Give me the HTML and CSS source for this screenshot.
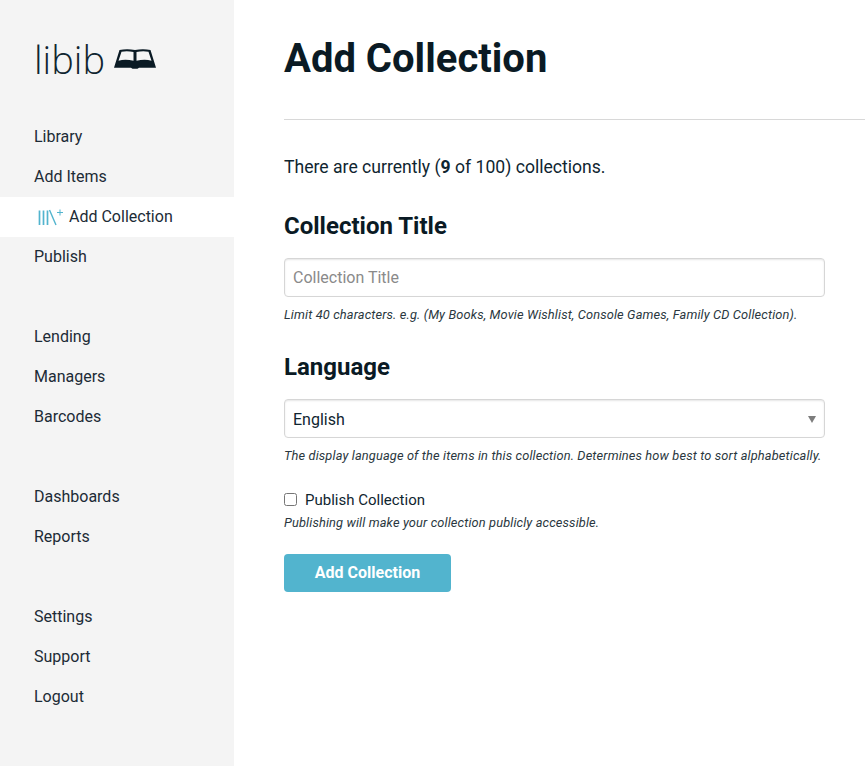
FILE: index.html
```html
<!DOCTYPE html>
<html lang="en">
<head>
<meta charset="utf-8">
<title>Add Collection</title>
<link rel="stylesheet" href="styles.css">
</head>
<body>
<div class="app">
  <aside class="sidebar">
    <div class="logo">
      <span class="logo-text">libib</span>
      <svg class="logo-icon" width="42" height="20" viewBox="0 0 42 20"><path fill-rule="evenodd" d="M5.500 1Q13 -.5 21 1 29 -.5 36.500 1L42 18.800H25L23.500 19.800H18.500L17 18.800H0ZM7.500 2.800 4.500 11.800Q11 9.800 19.500 11.800V3Q13 1.800 7.500 2.800ZM34.500 2.800Q29 1.800 22.500 3V11.800Q31 9.800 37.500 11.800Z" fill="#0a1a24"/></svg>
    </div>
    <nav class="nav">
      <div class="nav-group">
        <a class="nav-item">Library</a>
        <a class="nav-item">Add Items</a>
        <a class="nav-item active">
          <svg class="nav-icon" width="26" height="18" viewBox="0 0 26 18" fill="none" stroke="#52b4ce" stroke-width="1.700"><path d="M1.500 2.500V17M5.500 2.500V17M9.500 2.500V17"/><path d="M11.500 2 18 17" stroke-width="1.400"/><path d="M19 4.500H25M22 1.500V7.500" stroke-width="1"/></svg>
          Add Collection
        </a>
        <a class="nav-item">Publish</a>
      </div>
      <div class="nav-group">
        <a class="nav-item">Lending</a>
        <a class="nav-item">Managers</a>
        <a class="nav-item">Barcodes</a>
      </div>
      <div class="nav-group">
        <a class="nav-item">Dashboards</a>
        <a class="nav-item">Reports</a>
      </div>
      <div class="nav-group">
        <a class="nav-item">Settings</a>
        <a class="nav-item">Support</a>
        <a class="nav-item">Logout</a>
      </div>
    </nav>
  </aside>
  <main class="main">
    <h1 class="title">Add Collection</h1>
    <hr class="rule">
    <p class="count">There are currently (<b>9</b> of 100) collections.</p>
    <form class="form">
      <h2 class="heading">Collection Title</h2>
      <input class="field" type="text" placeholder="Collection Title">
      <p class="help">Limit 40 characters. e.g. (My Books, Movie Wishlist, Console Games, Family CD Collection).</p>
      <h2 class="heading lang">Language</h2>
      <div class="field select">English<span class="arrow"></span></div>
      <p class="help">The display language of the items in this collection. Determines how best to sort alphabetically.</p>
      <label class="check"><input class="box" type="checkbox"> Publish Collection</label>
      <p class="help tight">Publishing will make your collection publicly accessible.</p>
      <button class="btn" type="button">Add Collection</button>
    </form>
  </main>
</div>
</body>
</html>
```
FILE: styles.css
```css
* { box-sizing: border-box; }
html, body { margin: 0; height: 100%; overflow: hidden; }
body { font-family: Roboto, "Liberation Sans", sans-serif; color: #0a1a24; background: #fff; }
.app { display: flex; height: 766px; }
.sidebar { width: 234px; flex: none; background: #f4f4f4; }
.logo { display: flex; align-items: center; gap: 9px; height: 117px; padding: 0 0 0 34px; }
.logo-text { font-family: "Open Sans", sans-serif; font-weight: 300; font-size: 38px; line-height: 1; color: #0f2530; }
.nav-group { margin-bottom: 40px; }
.nav-item { display: flex; align-items: center; height: 40px; padding: 0 0 2px 34px; font-size: 16px; color: #1c2b36; }
.nav-item.active { background: #fff; padding-left: 38px; }
.nav-icon { margin: 2px 5px 0 0; flex: none; }
.main { flex: 1; padding: 0 0 0 50px; min-width: 0; }
.title { margin: 0; padding-top: 36px; font-size: 40px; line-height: 45px; font-weight: 700; color: #0a1a24; }
.rule { margin: 38px 0 0; border: 0; border-top: 1px solid #d8d8d8; }
.count { margin: 36px 0 0; font-size: 17.6px; line-height: 22px; color: #0f2530; }
.form { width: 541px; }
.heading { margin: 34px 0 0; font-size: 24px; line-height: 28px; font-weight: 700; color: #0a1a24; }
.heading.lang { margin-top: 30px; }
.field { display: block; width: 100%; height: 39px; margin-top: 18px; padding: 0 8px; border: 1px solid #d6d6d6; border-radius: 4px; box-shadow: inset 0 1px 2px rgba(0,0,0,.1); font-family: inherit; font-size: 16px; color: #0f2530; background: #fff; outline: 0; }
.field::placeholder { color: #8a8a8a; opacity: 1; }
.select { position: relative; line-height: 39px; }
.arrow { position: absolute; right: 8px; top: 16px; width: 0; height: 0; border-left: 4px solid transparent; border-right: 4px solid transparent; border-top: 7px solid #7d7d7d; }
.help { margin: 10px 0 0; font-size: 12.8px; line-height: 16px; font-style: italic; color: #2a3740; letter-spacing: .14px; }
.help.tight { margin-top: 5px; }
.check { display: flex; align-items: center; margin-top: 26px; height: 20px; font-size: 15px; color: #0f2530; }
.box { width: 13px; height: 13px; margin: 0 8px 2px 0; }
.btn { display: block; width: 167px; height: 38px; margin-top: 23px; padding: 0 0 2px; border: 0; border-radius: 4px; background: #52b4ce; color: #fff; font-family: inherit; font-size: 16px; font-weight: 700; }
```
